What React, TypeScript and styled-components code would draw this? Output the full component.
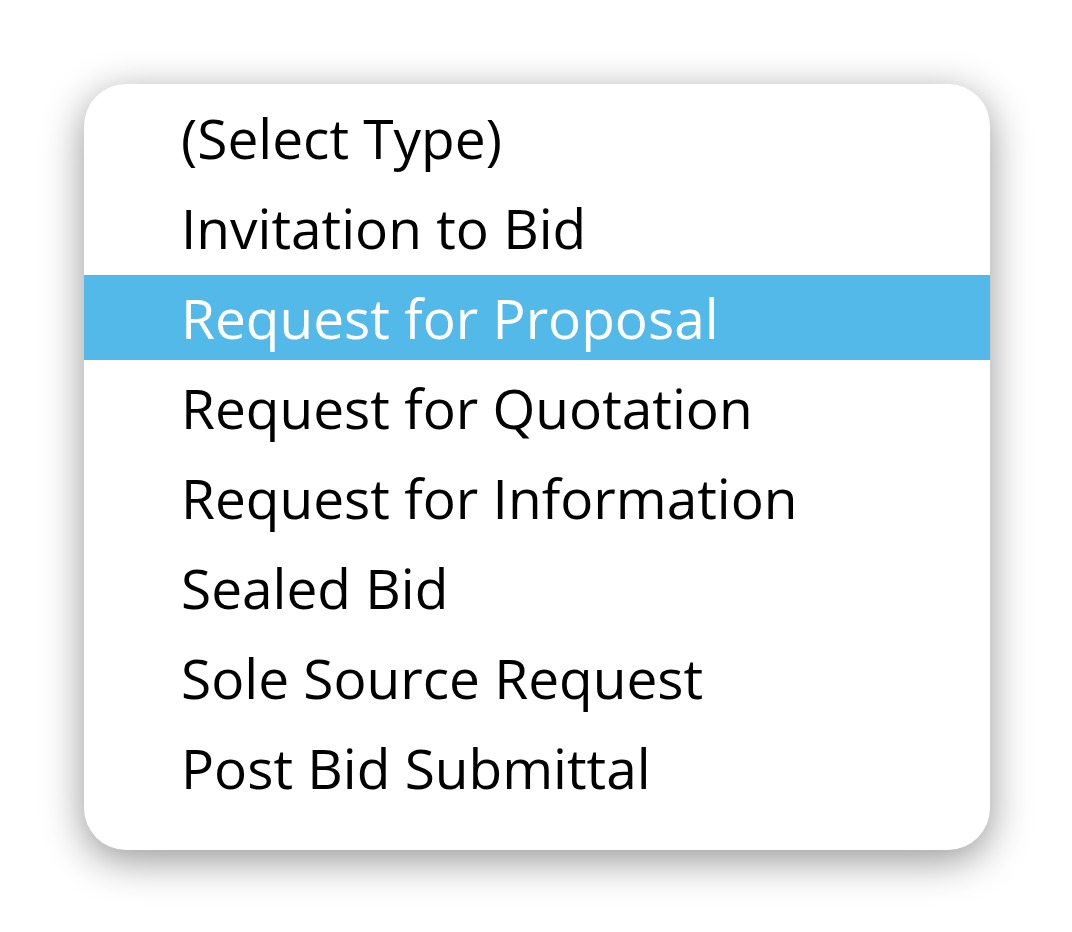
import styled, { createGlobalStyle } from "styled-components";

const GlobalStyle = createGlobalStyle`
	html, body {
		margin: 0;
		padding: 0;
		background: #ffffff;
	}
`;

const options = [
	"(Select Type)",
	"Invitation to Bid",
	"Request for Proposal",
	"Request for Quotation",
	"Request for Information",
	"Sealed Bid",
	"Sole Source Request",
	"Post Bid Submittal",
];

const selectedIndex = 2;

function App() {
	return (
		<>
			<GlobalStyle />
			<Page>
				<Menu>
					{options.map((label, index) => (
						<Option key={label} $active={index === selectedIndex}>
							{label}
						</Option>
					))}
				</Menu>
			</Page>
		</>
	);
}

const Page = styled.div`
	width: 1072px;
	height: 932px;
	box-sizing: border-box;
	padding: 84px 0 0 84px;
`;

const Menu = styled.div`
	width: 906px;
	height: 766px;
	box-sizing: border-box;
	padding-top: 11px;
	background: #ffffff;
	border-radius: 42px;
	box-shadow: 0 10px 40px rgba(0, 0, 0, 0.42);
	display: flex;
	flex-direction: column;
	gap: 5px;
	overflow: hidden;
`;

const Option = styled.div<{ $active?: boolean }>`
	height: 85px;
	flex-shrink: 0;
	display: flex;
	align-items: center;
	padding-left: 97px;
	font-family: "Open Sans", "Noto Sans", sans-serif;
	font-size: 55px;
	letter-spacing: 0;
	color: ${(p) => (p.$active ? "#ffffff" : "#000000")};
	background: ${(p) => (p.$active ? "#52b9e8" : "transparent")};
`;

export default App;
